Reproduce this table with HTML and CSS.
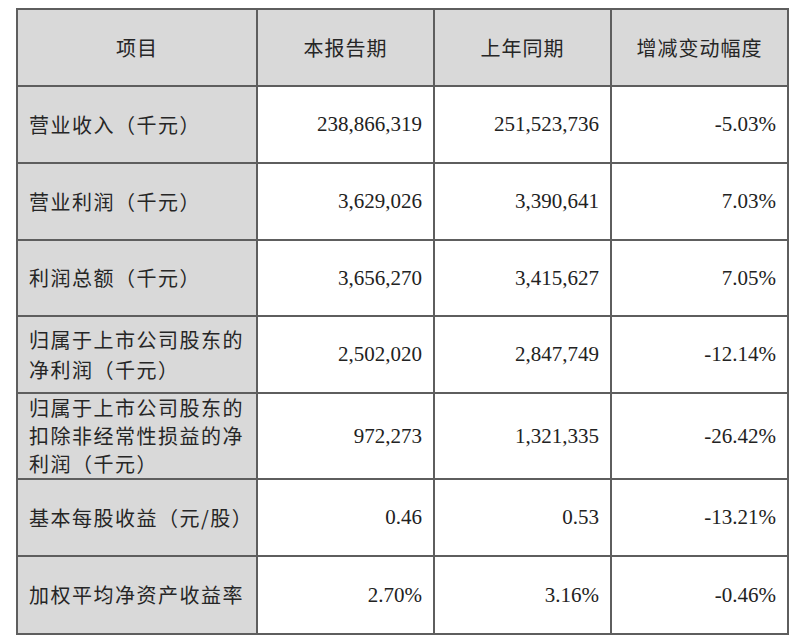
FILE: index.html
```html
<!DOCTYPE html>
<html lang="zh-CN">
<head>
<meta charset="utf-8">
<title>主要财务数据</title>
<link rel="stylesheet" href="styles.css">
</head>
<body>
<table class="fin">
  <colgroup>
    <col class="c-label">
    <col class="c-num">
    <col class="c-num">
    <col class="c-num">
  </colgroup>
  <thead>
    <tr class="r-head">
      <th>项目</th>
      <th>本报告期</th>
      <th>上年同期</th>
      <th>增减变动幅度</th>
    </tr>
  </thead>
  <tbody>
    <tr class="r-std">
      <td class="label">营业收入（千元）</td>
      <td class="num">238,866,319</td>
      <td class="num">251,523,736</td>
      <td class="num">-5.03%</td>
    </tr>
    <tr class="r-std">
      <td class="label">营业利润（千元）</td>
      <td class="num">3,629,026</td>
      <td class="num">3,390,641</td>
      <td class="num">7.03%</td>
    </tr>
    <tr class="r-short">
      <td class="label">利润总额（千元）</td>
      <td class="num">3,656,270</td>
      <td class="num">3,415,627</td>
      <td class="num">7.05%</td>
    </tr>
    <tr class="r-std">
      <td class="label">归属于上市公司股东的<br>净利润（千元）</td>
      <td class="num">2,502,020</td>
      <td class="num">2,847,749</td>
      <td class="num">-12.14%</td>
    </tr>
    <tr class="r-tall">
      <td class="label tight">归属于上市公司股东的<br>扣除非经常性损益的净<br>利润（千元）</td>
      <td class="num">972,273</td>
      <td class="num">1,321,335</td>
      <td class="num">-26.42%</td>
    </tr>
    <tr class="r-std">
      <td class="label">基本每股收益（元/股）</td>
      <td class="num">0.46</td>
      <td class="num">0.53</td>
      <td class="num">-13.21%</td>
    </tr>
    <tr class="r-last">
      <td class="label">加权平均净资产收益率</td>
      <td class="num">2.70%</td>
      <td class="num">3.16%</td>
      <td class="num">-0.46%</td>
    </tr>
  </tbody>
</table>
</body>
</html>
```

FILE: styles.css
```css
html, body {
  margin: 0;
  padding: 0;
  background: #ffffff;
}

body {
  padding: 8px 0 0 16px;
  color: #262626;
  font-family: "Noto Sans CJK SC", "Noto Sans", sans-serif;
}

.fin {
  border-collapse: collapse;
  table-layout: fixed;
  width: 772px;
}

.c-label { width: 240px; }
.c-num { width: 177px; }
.c-num:first-of-type { width: 178px; }

.fin th,
.fin td {
  border: 2px solid #5e5e5e;
  padding: 0 11px;
  vertical-align: middle;
  box-sizing: border-box;
}

.fin th {
  background: #d9d9d9;
  font-weight: 400;
  font-size: 20px;
  letter-spacing: 1px;
  text-align: center;
  color: #262626;
}

.r-head { height: 77px; }
.r-std { height: 77px; }
.r-short { height: 76px; }
.r-tall { height: 85px; }
.r-last { height: 78px; }

.label {
  background: #d9d9d9;
  font-size: 20px;
  letter-spacing: 1.5px;
  line-height: 30px;
  text-align: left;
  white-space: nowrap;
}

.label.tight {
  line-height: 28px;
}

.num {
  font-family: "Liberation Serif", "Times New Roman", serif;
  font-size: 21px;
  text-align: right;
  color: #222222;
}
```
